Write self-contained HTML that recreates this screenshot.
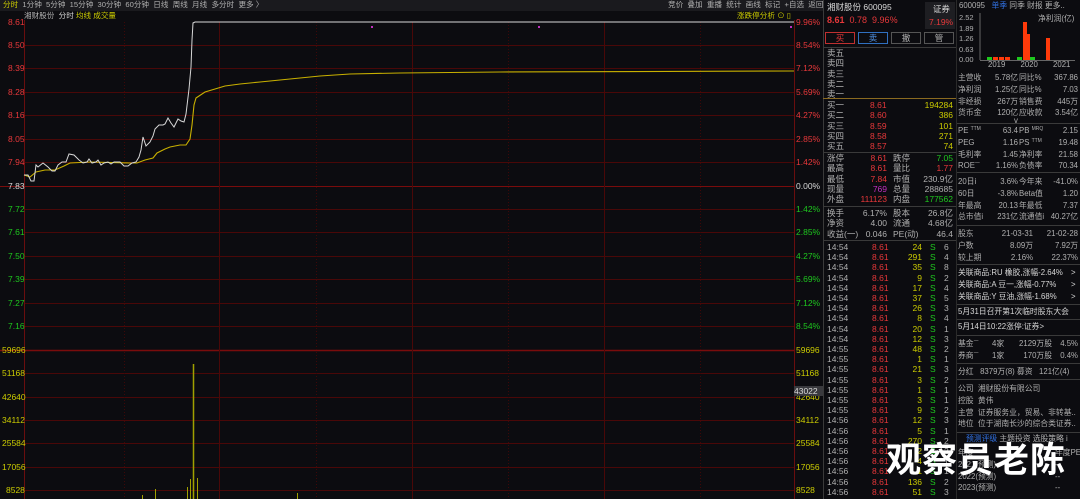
<!DOCTYPE html>
<html><head><meta charset="utf-8"><style>
*{margin:0;padding:0;box-sizing:border-box}
body{width:1080px;height:499px;background:#0c0c10;overflow:hidden;position:relative;font-family:"Liberation Sans","Noto Sans CJK SC",sans-serif;font-size:8.5px;color:#c8c8c8}
.a{position:absolute;white-space:nowrap;line-height:10px}
.r{color:#e8383a}.y{color:#cccc00}.g{color:#1ec81e}.w{color:#d8d8d8}.gr{color:#b0b0b0}.p{color:#c030c0}
.hl{position:absolute;height:1px;background:#3a3a3a}
.vl{position:absolute;width:1px;background:#3a3a3a}
.rp{font-size:7.8px}
.s{font-size:5px;vertical-align:top;line-height:8px}
</style></head><body>
<!-- top bar -->
<div class="a" style="left:0;top:0;width:823px;height:11px;background:#1a1a1e"></div>
<div class="a gr" style="left:3px;top:0;font-size:7.6px"><span class="y">分时</span>&nbsp; 1分钟&nbsp; 5分钟&nbsp; 15分钟&nbsp; 30分钟&nbsp; 60分钟&nbsp; 日线&nbsp; 周线&nbsp; 月线&nbsp; 多分时&nbsp; 更多 〉</div>
<div class="a gr" style="left:668px;top:0;font-size:7.6px">竞价 &nbsp;叠加 &nbsp;重播 &nbsp;统计 &nbsp;画线 &nbsp;标记 &nbsp;+自选 &nbsp;返回</div>
<div class="a" style="left:24px;top:11px;font-size:7.6px"><span class="gr">湘财股份</span>&nbsp; <span class="w">分时</span> <span class="y">均线 成交量</span></div>
<div class="a y" style="left:737px;top:11px;font-size:7.6px">涨跌停分析 ⊙ ▯</div>
<svg style="position:absolute;left:0;top:0" width="823" height="499">
<g stroke="#4a0808" stroke-width="1">
<line x1="24" y1="45.5" x2="794" y2="45.5"/><line x1="24" y1="68.5" x2="794" y2="68.5"/><line x1="24" y1="92.5" x2="794" y2="92.5"/><line x1="24" y1="115.5" x2="794" y2="115.5"/><line x1="24" y1="139.5" x2="794" y2="139.5"/><line x1="24" y1="162.5" x2="794" y2="162.5"/>
<line x1="24" y1="209.5" x2="794" y2="209.5"/><line x1="24" y1="232.5" x2="794" y2="232.5"/><line x1="24" y1="256.5" x2="794" y2="256.5"/><line x1="24" y1="279.5" x2="794" y2="279.5"/><line x1="24" y1="303.5" x2="794" y2="303.5"/><line x1="24" y1="326.5" x2="794" y2="326.5"/>
<line x1="24" y1="373.5" x2="794" y2="373.5"/><line x1="24" y1="397.5" x2="794" y2="397.5"/><line x1="24" y1="420.5" x2="794" y2="420.5"/><line x1="24" y1="443.5" x2="794" y2="443.5"/><line x1="24" y1="467.5" x2="794" y2="467.5"/><line x1="24" y1="490.5" x2="794" y2="490.5"/>
</g>
<g stroke="#7a0c0c"><line x1="0" y1="186.5" x2="794" y2="186.5"/><line x1="0" y1="350.5" x2="794" y2="350.5" stroke-width="1.5"/></g>
<g stroke="#3e0808" stroke-dasharray="1,2"><line x1="124.5" y1="22" x2="124.5" y2="499"/><line x1="316.5" y1="22" x2="316.5" y2="499"/><line x1="508.5" y1="22" x2="508.5" y2="499"/><line x1="700.5" y1="22" x2="700.5" y2="499"/></g>
<g stroke="#4a0808"><line x1="219.5" y1="22" x2="219.5" y2="499"/><line x1="412.5" y1="22" x2="412.5" y2="499"/><line x1="604.5" y1="22" x2="604.5" y2="499"/></g>
<line x1="24.5" y1="20" x2="24.5" y2="499" stroke="#6a0e0e"/><line x1="794.5" y1="20" x2="794.5" y2="499" stroke="#6a0e0e"/>
<polyline fill="none" stroke="#c8b000" stroke-width="1.1" points="24,175 30,177 36,172 45,170 55,170 64,166 70,163 90,162 130,163 137,163 145,160 153,158 157,153 165,149 170,147 180,145 186,145 190,139 192,125 194,105 196,98 205,92 215,89 225,86 240,84 260,82 290,79 320,76 350,74 400,73 500,72 794,71"/>
<polyline fill="none" stroke="#d8d8d8" stroke-width="1" points="24,175 28,175 31,181 34,181 36,165 38,167 43,163 48,167 52,171 55,171 58,165 62,162 66,162 69,154 74,155 79,160 83,163 87,162 89,159 92,163 96,162 98,160 101,165 104,163 108,162 111,164 114,162 117,162 120,162 124,166 128,166 132,163 136,162 139,157 141,150 143,137 146,146 150,142 153,136 155,129 159,125 163,125 165,124 168,118 171,123 174,127 178,119 181,121 184,122 186,114 189,89 191,67 192,40 193,23 195,22 794,22"/>
<rect x="371" y="26" width="2" height="2" fill="#c030c0"/><rect x="538" y="26" width="2" height="2" fill="#c030c0"/><rect x="790" y="26" width="2" height="2" fill="#c030c0"/>
<g stroke="#a0a000" stroke-width="1"><line x1="142.5" y1="495" x2="142.5" y2="499"/><line x1="155.5" y1="489" x2="155.5" y2="499"/><line x1="187.5" y1="487" x2="187.5" y2="499"/><line x1="190.5" y1="479" x2="190.5" y2="499"/><line x1="193.5" y1="364" x2="193.5" y2="499" stroke-width="1.5"/><line x1="197.5" y1="478" x2="197.5" y2="499"/><line x1="297.5" y1="493" x2="297.5" y2="499"/></g>
</svg>
<!-- left axis -->
<div class="a r" style="left:8px;top:17px">8.61</div><div class="a r" style="left:8px;top:40px">8.50</div><div class="a r" style="left:8px;top:63px">8.39</div><div class="a r" style="left:8px;top:87px">8.28</div><div class="a r" style="left:8px;top:110px">8.16</div><div class="a r" style="left:8px;top:134px">8.05</div><div class="a r" style="left:8px;top:157px">7.94</div><div class="a w" style="left:8px;top:181px">7.83</div>
<div class="a g" style="left:8px;top:204px">7.72</div><div class="a g" style="left:8px;top:227px">7.61</div><div class="a g" style="left:8px;top:251px">7.50</div><div class="a g" style="left:8px;top:274px">7.39</div><div class="a g" style="left:8px;top:298px">7.27</div><div class="a g" style="left:8px;top:321px">7.16</div>
<div class="a y" style="left:2px;top:345px">59696</div><div class="a y" style="left:2px;top:368px">51168</div><div class="a y" style="left:2px;top:392px">42640</div><div class="a y" style="left:2px;top:415px">34112</div><div class="a y" style="left:2px;top:438px">25584</div><div class="a y" style="left:2px;top:462px">17056</div><div class="a y" style="left:6px;top:485px">8528</div>
<!-- right axis -->
<div class="a r" style="left:796px;top:17px">9.96%</div><div class="a r" style="left:796px;top:40px">8.54%</div><div class="a r" style="left:796px;top:63px">7.12%</div><div class="a r" style="left:796px;top:87px">5.69%</div><div class="a r" style="left:796px;top:110px">4.27%</div><div class="a r" style="left:796px;top:134px">2.85%</div><div class="a r" style="left:796px;top:157px">1.42%</div><div class="a w" style="left:796px;top:181px">0.00%</div>
<div class="a g" style="left:796px;top:204px">1.42%</div><div class="a g" style="left:796px;top:227px">2.85%</div><div class="a g" style="left:796px;top:251px">4.27%</div><div class="a g" style="left:796px;top:274px">5.69%</div><div class="a g" style="left:796px;top:298px">7.12%</div><div class="a g" style="left:796px;top:321px">8.54%</div>
<div class="a y" style="left:796px;top:345px">59696</div><div class="a y" style="left:796px;top:368px">51168</div><div class="a y" style="left:796px;top:392px">42640</div><div class="a y" style="left:796px;top:415px">34112</div><div class="a y" style="left:796px;top:438px">25584</div><div class="a y" style="left:796px;top:462px">17056</div><div class="a y" style="left:796px;top:485px">8528</div>
<div class="a w" style="left:794px;top:386px;background:#3a3a3e;width:29px;height:10px">43022</div>
<!-- order panel -->
<div class="vl" style="left:823px;top:0;height:499px"></div>
<div class="vl" style="left:956px;top:0;height:499px;background:#2a2a2a"></div>
<div class="a w" style="left:827px;top:2px;font-size:8.5px">湘财股份 600095</div>
<div class="a r" style="left:827px;top:15px;font-size:9px"><b>8.61</b> &nbsp;0.78 &nbsp;9.96%</div>
<div class="a" style="left:925px;top:2px;width:30px;height:27px;background:#1e1e22"></div>
<div class="a w" style="left:933px;top:4px">证券</div><div class="a r" style="left:929px;top:17px">7.19%</div>
<div class="a r" style="left:825px;top:32px;width:30px;height:12px;border:1px solid #c03030;text-align:center;line-height:10px">买</div>
<div class="a" style="left:858px;top:32px;width:30px;height:12px;border:1px solid #3070c0;text-align:center;line-height:10px;color:#5090e0">卖</div>
<div class="a gr" style="left:891px;top:32px;width:30px;height:12px;border:1px solid #555;text-align:center;line-height:10px">撤</div>
<div class="a gr" style="left:924px;top:32px;width:30px;height:12px;border:1px solid #555;text-align:center;line-height:10px">管</div>
<div class="hl" style="left:823px;top:47px;width:133px"></div>
<div class="a gr" style="left:827px;top:48px;line-height:10.3px">卖五<br>卖四<br>卖三<br>卖二<br>卖一</div>
<div class="hl" style="left:823px;top:98px;width:133px;background:#8a6a20"></div>
<div class="a gr" style="left:827px;top:100px;line-height:10.3px">买一<br>买二<br>买三<br>买四<br>买五</div>
<div class="a r" style="left:870px;top:100px;line-height:10.3px">8.61<br>8.60<br>8.59<br>8.58<br>8.57</div>
<div class="a y" style="left:900px;top:100px;width:53px;text-align:right;line-height:10.3px">194284<br>386<br>101<br>271<br>74</div>
<div class="hl" style="left:823px;top:152px;width:133px"></div>
<div class="a gr" style="left:827px;top:153px;line-height:10.3px">涨停<br>最高<br>最低<br>现量<br>外盘</div>
<div class="a" style="left:850px;top:153px;width:37px;text-align:right;line-height:10.3px"><span class="r">8.61</span><br><span class="r">8.61</span><br><span class="r">7.84</span><br><span class="p">769</span><br><span class="r">111123</span></div>
<div class="a gr" style="left:893px;top:153px;line-height:10.3px">跌停<br>量比<br>市值<br>总量<br>内盘</div>
<div class="a" style="left:910px;top:153px;width:43px;text-align:right;line-height:10.3px"><span class="g">7.05</span><br><span class="r">1.77</span><br><span class="gr">230.9亿</span><br><span class="gr">288685</span><br><span class="g">177562</span></div>
<div class="hl" style="left:823px;top:206px;width:133px"></div>
<div class="a gr" style="left:827px;top:208px;line-height:10.3px">换手<br>净资<br>收益(一)</div>
<div class="a gr" style="left:850px;top:208px;width:37px;text-align:right;line-height:10.3px">6.17%<br>4.00<br>0.046</div>
<div class="a gr" style="left:893px;top:208px;line-height:10.3px">股本<br>流通<br>PE(动)</div>
<div class="a gr" style="left:910px;top:208px;width:43px;text-align:right;line-height:10.3px">26.8亿<br>4.68亿<br>46.4</div>
<div class="hl" style="left:823px;top:240px;width:133px"></div>
<div class="a gr" style="left:827px;top:242px;line-height:10.2px">14:54<br>14:54<br>14:54<br>14:54<br>14:54<br>14:54<br>14:54<br>14:54<br>14:54<br>14:54<br>14:55<br>14:55<br>14:55<br>14:55<br>14:55<br>14:55<br>14:55<br>14:56<br>14:56<br>14:56<br>14:56<br>14:56<br>14:56<br>14:56<br>14:56</div>
<div class="a r" style="left:872px;top:242px;line-height:10.2px">8.61<br>8.61<br>8.61<br>8.61<br>8.61<br>8.61<br>8.61<br>8.61<br>8.61<br>8.61<br>8.61<br>8.61<br>8.61<br>8.61<br>8.61<br>8.61<br>8.61<br>8.61<br>8.61<br>8.61<br>8.61<br>8.61<br>8.61<br>8.61<br>8.61</div>
<div class="a y" style="left:900px;top:242px;width:22px;text-align:right;line-height:10.2px">24<br>291<br>35<br>9<br>17<br>37<br>26<br>8<br>20<br>12<br>48<br>1<br>21<br>3<br>1<br>3<br>9<br>12<br>5<br>270<br>2<br>4<br>1<br>136<br>51</div>
<div class="a g" style="left:930px;top:242px;line-height:10.2px">S<br>S<br>S<br>S<br>S<br>S<br>S<br>S<br>S<br>S<br>S<br>S<br>S<br>S<br>S<br>S<br>S<br>S<br>S<br>S<br>S<br>S<br>S<br>S<br>S</div>
<div class="a gr" style="left:944px;top:242px;line-height:10.2px">6<br>4<br>8<br>2<br>4<br>5<br>3<br>4<br>1<br>3<br>2<br>1<br>3<br>2<br>1<br>1<br>2<br>3<br>1<br>2<br>2<br>1<br>1<br>2<br>3</div>
<!-- right panel -->
<div class="rp">
<div class="a gr" style="left:959px;top:1px">600095 &nbsp;&nbsp;<span style="color:#3070e0">单季</span> 同季 财报 更多..</div>
<div class="a gr" style="left:959px;top:13px;line-height:10.5px;font-size:7.5px">2.52<br>1.89<br>1.26<br>0.63<br>0.00</div>
<div class="a gr" style="left:1038px;top:14px">净利润(亿)</div>
<svg style="position:absolute;left:955px;top:10px" width="125" height="55"><line x1="25" y1="3" x2="25" y2="50" stroke="#666"/><line x1="25" y1="50.5" x2="120" y2="50.5" stroke="#666"/>
<g fill="#1ec81e"><rect x="32" y="47" width="5" height="3"/><rect x="62" y="47" width="5" height="3"/><rect x="75" y="47" width="5" height="3"/></g>
<g fill="#ff3a0a"><rect x="38" y="47" width="5" height="3"/><rect x="44" y="47" width="5" height="3"/><rect x="50" y="47" width="5" height="3"/><rect x="68" y="12" width="4" height="38"/><rect x="71" y="24" width="4" height="26"/><rect x="91" y="28" width="4" height="22"/></g></svg>
<div class="a gr" style="left:988px;top:60px">2019 &nbsp;&nbsp;&nbsp;&nbsp;&nbsp; 2020 &nbsp;&nbsp;&nbsp;&nbsp;&nbsp; 2021</div>
<div class="a gr" style="left:958px;top:72px;line-height:11.8px">主营收<br>净利润<br>非经损<br>货币金</div>
<div class="a gr" style="left:980px;top:72px;width:38px;text-align:right;line-height:11.8px">5.78亿<br>1.25亿<br>267万<br>120亿</div>
<div class="a gr" style="left:1019px;top:72px;line-height:11.8px">同比%<br>同比%<br>销售费<br>应收款</div>
<div class="a gr" style="left:1040px;top:72px;width:38px;text-align:right;line-height:11.8px">367.86<br>7.03<br>445万<br>3.54亿</div>
<div class="a gr" style="left:1014px;top:116px">v</div>
<div class="hl" style="left:957px;top:123px;width:123px"></div>
<div class="a gr" style="left:958px;top:125px;line-height:11.8px">PE <span class="s">TTM</span><br>PEG<br>毛利率<br>ROE<span class="s">一</span></div>
<div class="a gr" style="left:980px;top:125px;width:38px;text-align:right;line-height:11.8px">63.4<br>1.16<br>1.45<br>1.16%</div>
<div class="a gr" style="left:1019px;top:125px;line-height:11.8px">PB <span class="s">MRQ</span><br>PS <span class="s">TTM</span><br>净利率<br>负债率</div>
<div class="a gr" style="left:1040px;top:125px;width:38px;text-align:right;line-height:11.8px">2.15<br>19.48<br>21.58<br>70.34</div>
<div class="hl" style="left:957px;top:172px;width:123px"></div>
<div class="a gr" style="left:958px;top:176px;line-height:11.8px">20日i<br>60日<br>年最高<br>总市值i</div>
<div class="a gr" style="left:980px;top:176px;width:38px;text-align:right;line-height:11.8px">3.6%<br>-3.8%<br>20.13<br>231亿</div>
<div class="a gr" style="left:1019px;top:176px;line-height:11.8px">今年来<br>Beta值<br>年最低<br>流通值i</div>
<div class="a gr" style="left:1040px;top:176px;width:38px;text-align:right;line-height:11.8px">-41.0%<br>1.20<br>7.37<br>40.27亿</div>
<div class="hl" style="left:957px;top:225px;width:123px"></div>
<div class="a gr" style="left:958px;top:228px;line-height:11.8px">股东<br>户数<br>较上期</div>
<div class="a gr" style="left:990px;top:228px;width:43px;text-align:right;line-height:11.8px">21-03-31<br>8.09万<br>2.16%</div>
<div class="a gr" style="left:1035px;top:228px;width:43px;text-align:right;line-height:11.8px">21-02-28<br>7.92万<br>22.37%</div>
<div class="hl" style="left:957px;top:264px;width:123px"></div>
<div class="a w" style="left:958px;top:267px;line-height:11.8px">关联商品:RU 橡胶,涨幅-2.64%<br>关联商品:A 豆一,涨幅-0.77%<br>关联商品:Y 豆油,涨幅-1.68%</div>
<div class="a w" style="left:1071px;top:267px;line-height:11.8px">&gt;<br>&gt;<br>&gt;</div>
<div class="hl" style="left:957px;top:304px;width:123px"></div>
<div class="a w" style="left:958px;top:307px">5月31日召开第1次临时股东大会</div>
<div class="hl" style="left:957px;top:319px;width:123px"></div>
<div class="a w" style="left:958px;top:322px">5月14日10:22涨停:证券&gt;</div>
<div class="hl" style="left:957px;top:335px;width:123px"></div>
<div class="a gr" style="left:958px;top:338px;line-height:11.8px">基金<span class="s">一</span><br>券商<span class="s">一</span></div>
<div class="a gr" style="left:992px;top:338px;line-height:11.8px">4家<br>1家</div>
<div class="a gr" style="left:1010px;top:338px;width:42px;text-align:right;line-height:11.8px">2129万股<br>170万股</div>
<div class="a gr" style="left:1055px;top:338px;width:23px;text-align:right;line-height:11.8px">4.5%<br>0.4%</div>
<div class="hl" style="left:957px;top:363px;width:123px"></div>
<div class="a gr" style="left:958px;top:367px">分红 &nbsp;&nbsp;8379万(8) 募资 &nbsp;&nbsp;121亿(4)</div>
<div class="hl" style="left:957px;top:379px;width:123px"></div>
<div class="a gr" style="left:958px;top:383px;line-height:11.8px">公司 &nbsp;湘财股份有限公司<br>控股 &nbsp;黄伟<br>主营 &nbsp;证券服务业，贸易、非转基..<br>地位 &nbsp;位于湖南长沙的综合类证券..</div>
<div class="hl" style="left:957px;top:432px;width:123px"></div>
<div class="a gr" style="left:966px;top:434px"><span style="color:#3070e0">预测评级</span> 主题投资 选股策略 i</div>
<div class="a gr" style="left:958px;top:447px;line-height:11.8px">年度<br>2021(预测)<br>2022(预测)<br>2023(预测)</div>
<div class="a gr" style="left:1055px;top:447px;line-height:11.8px">年度PE<br>--<br>--<br>--</div>
</div>
<div class="a" style="left:886px;top:437px;font-size:35px;line-height:42px;color:#fff;font-weight:bold;letter-spacing:1px;font-family:'Noto Sans CJK SC',sans-serif">观察员老陈</div>
</body></html>
